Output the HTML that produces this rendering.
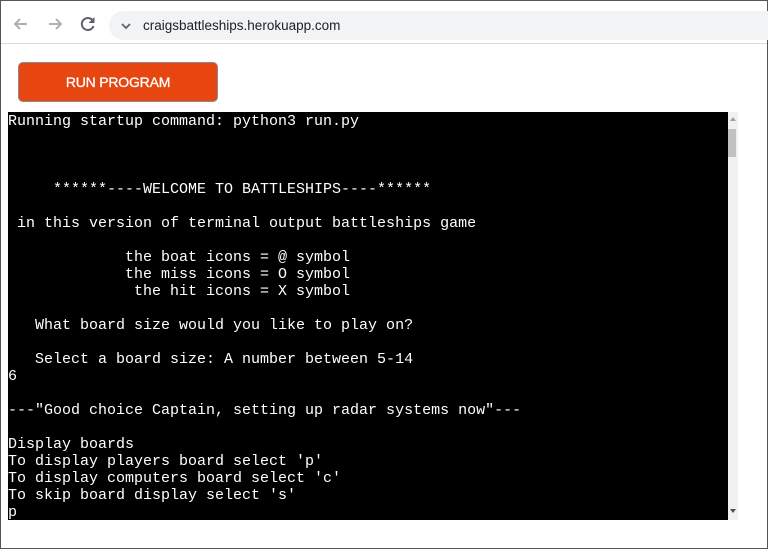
<!DOCTYPE html>
<html><head><style>
body{margin:0;width:768px;height:549px;overflow:hidden;background:#fff;position:relative;font-family:"Liberation Sans",sans-serif}
.frame{position:absolute;left:0;top:0;width:766px;height:547px;border:1px solid #555;box-sizing:content-box}
.bar{position:absolute;left:1px;top:1px;right:1px;height:42px;background:#fff;border-bottom:1px solid #dadce0}
.pill{position:absolute;left:108px;top:10px;width:680px;height:29px;border-radius:15px;background:#f1f3f4}
.url{position:absolute;left:142px;top:17px;font-size:13.5px;color:#202124}
.btn{position:absolute;left:18px;top:62px;width:198px;height:38px;background:#e84610;border:1px solid #8a8a8a;border-radius:5px;color:#fff;font-size:14px;font-weight:normal;text-align:center;line-height:38px;letter-spacing:-0.2px;-webkit-text-stroke:0.3px #fff}
.term{position:absolute;left:8px;top:112px;width:720px;height:408px;background:#000;overflow:hidden}
pre{margin:0;font-family:"Liberation Mono",monospace;font-size:15px;line-height:17px;color:#fff;padding-top:1px}
.sb{position:absolute;left:728px;top:112px;width:10px;height:408px;background:#f1f1f1}
.thumb{position:absolute;left:0;top:17px;width:8px;height:28px;background:#c1c1c1}
</style></head><body>
<div class="frame"></div>
<div class="bar">
<svg style="position:absolute;left:10px;top:13px" width="20" height="20" viewBox="0 0 20 20"><path d="M16 10H4M9 5L4 10L9 15" stroke="#b0b0b0" stroke-width="2" fill="none"/></svg>
<svg style="position:absolute;left:44px;top:13px" width="20" height="20" viewBox="0 0 20 20"><path d="M4 10H16M11 5L16 10L11 15" stroke="#b0b0b0" stroke-width="2" fill="none"/></svg>
<svg style="position:absolute;left:77px;top:13px" width="20" height="20" viewBox="0 0 20 20"><path d="M15.5 8A6 6 0 1 0 15.5 12" stroke="#5f6368" stroke-width="2" fill="none"/><path d="M16.5 3V9H10.5Z" fill="#5f6368"/></svg>
<div class="pill"></div>
<svg style="position:absolute;left:119px;top:20px" width="12" height="10" viewBox="0 0 12 10"><path d="M2 3L6 7L10 3" stroke="#5f6368" stroke-width="1.8" fill="none"/></svg>
<div class="url">craigsbattleships.herokuapp.com</div>
</div>
<div class="btn">RUN PROGRAM</div>
<div class="term"><pre>Running startup command: python3 run.py



     ******----WELCOME TO BATTLESHIPS----******

 in this version of terminal output battleships game

             the boat icons = @ symbol
             the miss icons = O symbol
              the hit icons = X symbol

   What board size would you like to play on?

   Select a board size: A number between 5-14
6

---"Good choice Captain, setting up radar systems now"---

Display boards
To display players board select 'p'
To display computers board select 'c'
To skip board display select 's'
p</pre></div>
<div class="sb"><div class="thumb"></div>
<svg style="position:absolute;left:1px;top:4px" width="8" height="6"><path d="M1 5L4 1L7 5Z" fill="#a0a0a0"/></svg>
<svg style="position:absolute;left:1px;top:396px" width="8" height="6"><path d="M1 1L4 5L7 1Z" fill="#505050"/></svg>
</div>
</body></html>
